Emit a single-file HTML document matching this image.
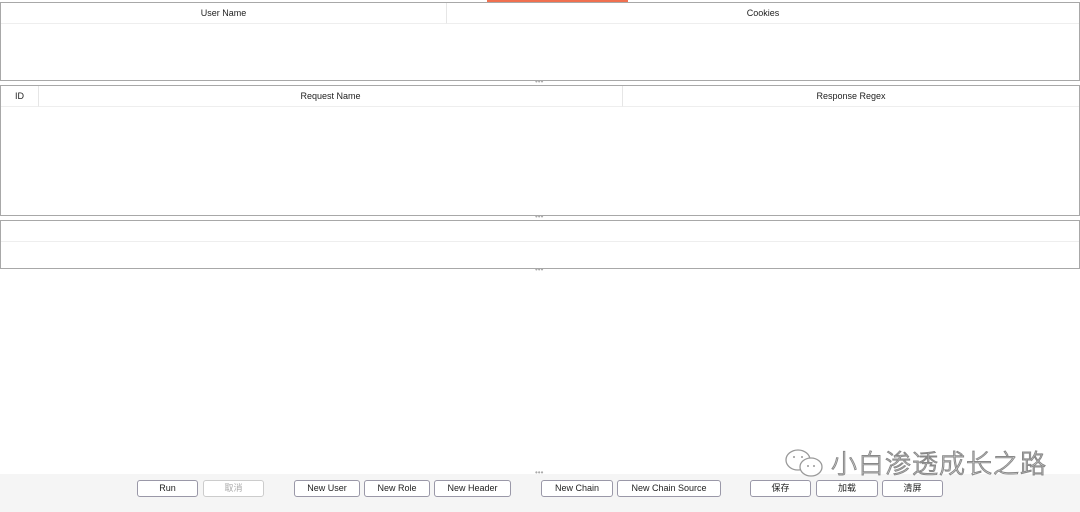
<!DOCTYPE html><html><head><style>
body{margin:0;width:1080px;height:512px;background:#fff;position:relative;overflow:hidden;font-family:"Liberation Sans","Noto Sans CJK SC",sans-serif;font-size:9px;color:#222}
.a{position:absolute}
.p{position:absolute;left:0;width:1078px;border:1px solid #a8a8a8;background:#fff}
.h{position:absolute;top:0;height:20px;line-height:20px;text-align:center;border-bottom:1px solid #eee;border-right:1px solid #e6e6e6}
.b{position:absolute;top:480px;height:15px;border:1px solid #9a98a8;border-radius:3px;background:#fff;text-align:center;line-height:15px;font-size:9px}
.d{position:absolute;color:#aaa;font-size:8px;line-height:4px;letter-spacing:0px}
</style></head><body>
<div class="a" style="left:487px;top:0;width:141px;height:2px;background:#f07050"></div>
<div class="p" style="top:2px;height:77px"><div class="h" style="left:0;width:445px">User Name</div><div class="h" style="left:446px;width:632px;border-right:0">Cookies</div></div>
<div class="d" style="left:535px;top:80px">•••</div>
<div class="p" style="top:85px;height:129px"><div class="h" style="left:0;width:37px">ID</div><div class="h" style="left:38px;width:583px">Request Name</div><div class="h" style="left:622px;width:456px;border-right:0">Response Regex</div></div>
<div class="d" style="left:535px;top:215px">•••</div>
<div class="p" style="top:220px;height:47px"><div class="h" style="left:0;width:1078px;border-right:0"></div></div>
<div class="d" style="left:535px;top:268px">•••</div>
<div class="a" style="left:0;top:474px;width:1080px;height:38px;background:#f5f5f5"></div>
<div class="d" style="left:535px;top:471px">•••</div>
<div class="b" style="left:137px;width:59px">Run</div>
<div class="b" style="left:203px;width:59px;color:#aaa;border-color:#ccc">取消</div>
<div class="b" style="left:294px;width:64px">New User</div>
<div class="b" style="left:364px;width:64px">New Role</div>
<div class="b" style="left:434px;width:75px">New Header</div>
<div class="b" style="left:541px;width:70px">New Chain</div>
<div class="b" style="left:617px;width:102px">New Chain Source</div>
<div class="b" style="left:750px;width:59px">保存</div>
<div class="b" style="left:816px;width:60px">加载</div>
<div class="b" style="left:882px;width:59px">清屏</div>
<svg class="a" style="left:783px;top:448px" width="46" height="32" viewBox="0 0 46 32" fill="#fff" stroke="#999" stroke-width="1.3"><ellipse cx="15" cy="12" rx="12" ry="10"/><ellipse cx="28" cy="19" rx="11" ry="9"/><circle cx="11" cy="9" r="1" fill="#999" stroke="none"/><circle cx="19" cy="9" r="1" fill="#999" stroke="none"/><circle cx="25" cy="18" r="1" fill="#999" stroke="none"/><circle cx="31" cy="18" r="1" fill="#999" stroke="none"/></svg>
<div class="a" style="left:831px;top:447px;font-size:26px;letter-spacing:1px;line-height:32px;color:#fff;-webkit-text-stroke:1px #888;font-family:'Noto Sans CJK SC',sans-serif;font-weight:300">小白渗透成长之路</div>
</body></html>
